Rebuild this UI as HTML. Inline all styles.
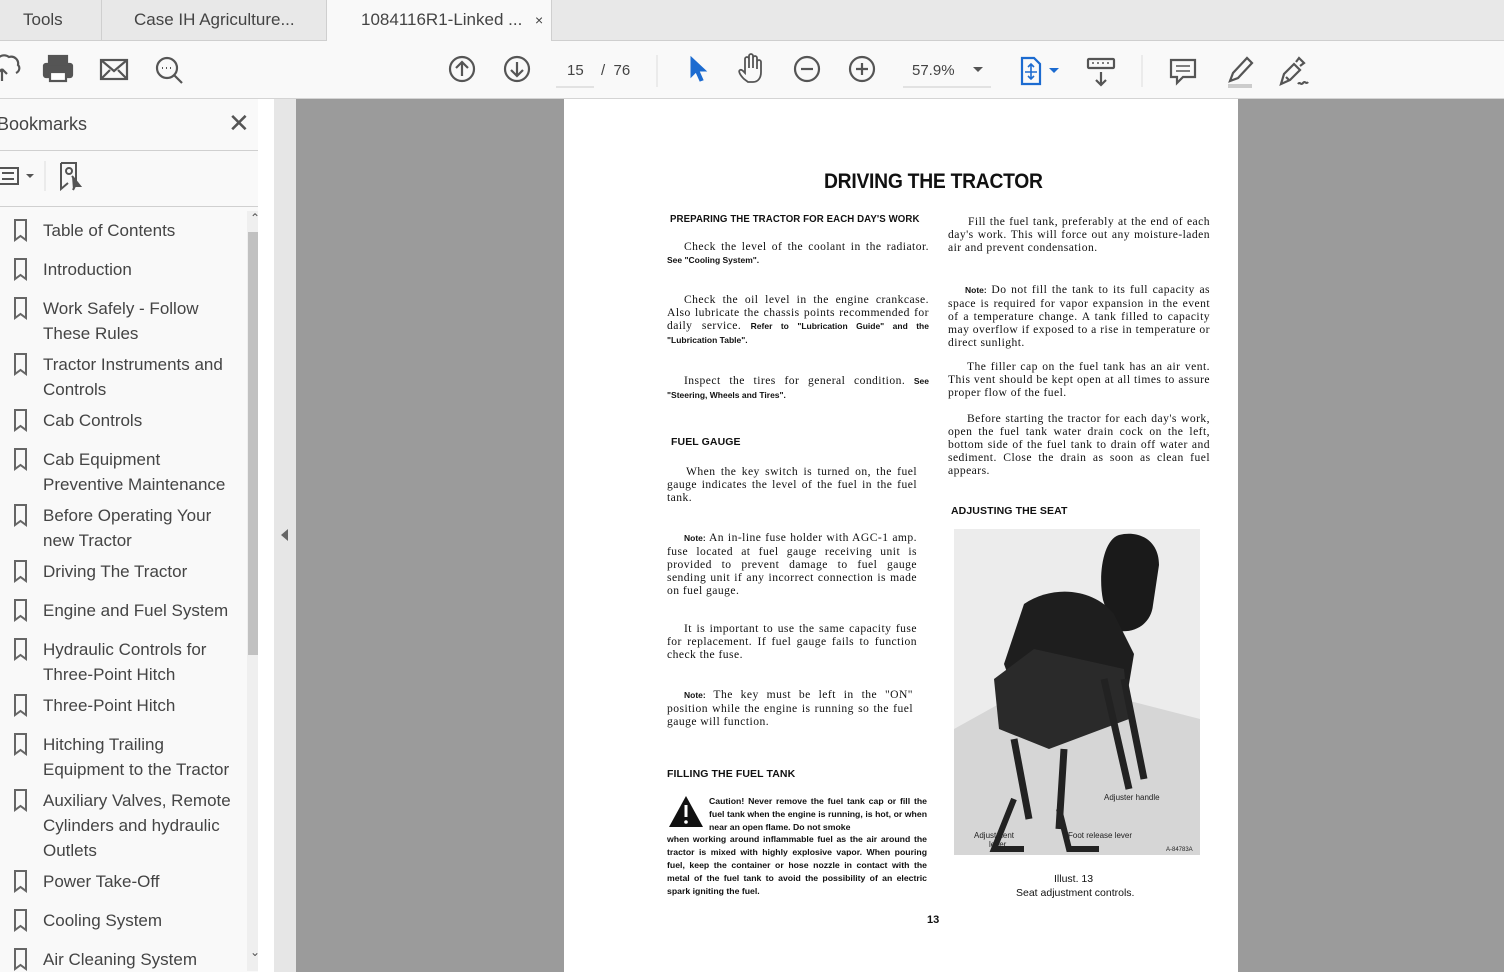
<!DOCTYPE html>
<html><head><meta charset="utf-8"><style>
*{margin:0;padding:0;box-sizing:border-box}
html,body{width:1504px;height:972px;overflow:hidden}
body{background:#9b9b9b;font-family:"Liberation Sans",sans-serif;position:relative}
.abs{position:absolute}
#tabs{left:0;top:0;width:1504px;height:41px;background:#e8e8e8;border-bottom:1px solid #cfcfcf}
.tab{position:absolute;top:0;height:41px;font-size:17px;color:#444;line-height:40px;border-right:1px solid #cfcfcf}
#tb{left:0;top:41px;width:1504px;height:58px;background:#f9f9f9;border-bottom:1px solid #d4d4d4}
#side{left:0;top:99px;width:274px;height:873px;background:#f9f9f9;overflow:hidden}
#split{left:274px;top:99px;width:22px;height:873px;background:#e6e6e6}
#page{left:564px;top:99px;width:674px;height:873px;background:#fff;font-family:"Liberation Serif",serif;color:#111}
.bm{position:absolute;left:43px;width:210px;white-space:nowrap;font-size:17px;color:#444;line-height:25px}
.p{position:absolute;font-size:11.6px;line-height:13px;letter-spacing:.45px;text-align:justify}
.h{position:absolute;font-family:"Liberation Sans",sans-serif;font-weight:bold;font-size:10.5px;letter-spacing:.1px;white-space:nowrap}
.sm{font-family:"Liberation Sans",sans-serif;font-size:8.5px;font-weight:bold;letter-spacing:0}
</style></head><body>
<div id="tabs" class="abs">
<div class="tab" style="left:0;width:102px;padding-left:23px">Tools</div>
<div class="tab" style="left:102px;width:225px;padding-left:32px">Case IH Agriculture...</div>
<div class="tab" style="left:327px;width:225px;background:#f9f9f9;height:42px;padding-left:34px">1084116R1-Linked ... <span style="font-size:14px;margin-left:8px">×</span></div>
</div>
<div id="tb" class="abs">
<svg width="1504" height="58" style="position:absolute;left:0;top:0" fill="none" stroke="#555" stroke-width="2.2">
<path d="M2 40v-12m0 0l-5 5M2 28l5 5M-3 26a8 8 0 0 1 12-10a7 7 0 0 1 9 8c2 2 2 6-2 8"/>
<rect x="44" y="23" width="28" height="13" rx="2" fill="#555"/><rect x="49" y="15" width="18" height="8" fill="#555"/><rect x="50" y="31" width="16" height="9" fill="#fff" stroke="#555"/>
<rect x="101" y="19" width="26" height="19"/><path d="M101 19l13 11 13-11M101 38l9-9m17 9l-9-9"/>
<circle cx="167" cy="27" r="10"/><path d="M174 34l8 8"/><path d="M162 27h1m3 0h1m3 0h1" stroke-width="2"/>
<circle cx="462" cy="28" r="12"/><path d="M462 35V21m-6 6l6-6 6 6"/>
<circle cx="517" cy="28" r="12"/><path d="M517 21v14m-6-6l6 6 6-6"/>
<path d="M556 46h38M903 46h88" stroke="#ccc" stroke-width="1"/>
<path d="M657 14v32M1142 14v32" stroke="#ddd" stroke-width="1"/>
<path d="M691 16l15 14h-7l4 9-3 1-4-9-5 5z" fill="#1c6bd0" stroke="#1c6bd0" stroke-width="1"/>
<path d="M744 38c-4-4-6-8-4-9 2-1 4 2 5 3V18a2 2 0 0 1 4 0v9V15a2 2 0 0 1 4 0v12V17a2 2 0 0 1 4 0v11-7a2 2 0 0 1 4 0v10c0 6-3 10-8 10h-5z" stroke-width="1.8"/>
<circle cx="807" cy="28" r="12"/><path d="M801 28h12"/>
<circle cx="862" cy="28" r="12"/><path d="M856 28h12M862 22v12"/>
<path d="M973 26l5 5 5-5z" fill="#555" stroke="none"/>
<path d="M1022 17h12l6 6v20h-18z" stroke="#1c6bd0"/><path d="M1031 23v15m-6-7h12m-9-5l3-3 3 3m-6 9l3 3 3-3" stroke="#1c6bd0" stroke-width="1.6"/>
<path d="M1049 27l5 5 5-5z" fill="#1c6bd0" stroke="none"/>
<rect x="1088" y="18" width="26" height="9" rx="1"/><path d="M1092 22h2m3 0h2m3 0h2m3 0h2" stroke-width="1.4"/><path d="M1101 31v13m-5-5l5 5 5-5"/>
<path d="M1171 19h24v17h-12l-6 6v-6h-6z"/><path d="M1176 25h14M1176 30h14" stroke-width="1.5"/>
<path d="M1230 40l3-8 14-15 5 5-14 15z"/><path d="M1228 45h24" stroke="#ccc" stroke-width="4"/>
<path d="M1281 43l3-10 10-10 6 6-10 10zM1296 21l3-4 5 5-4 3M1286 36l3 3M1298 43c2-3 3 2 5-1s3 2 5-1"/>
</svg>
<div class="abs" style="left:567px;top:21px;font-size:15px;color:#444">15</div>
<div class="abs" style="left:601px;top:21px;font-size:15px;color:#444">/ &nbsp;76</div>
<div class="abs" style="left:912px;top:21px;font-size:15px;color:#444">57.9%</div>
</div>
<div id="side" class="abs">
<div class="abs" style="left:-3px;top:15px;font-size:18px;color:#444">Bookmarks</div>
<div class="abs" style="left:228px;top:9px;font-size:26px;color:#555">✕</div>
<div class="abs" style="left:0;top:51px;width:258px;height:1px;background:#d0d0d0"></div>
<svg class="abs" style="left:0;top:62px" width="100" height="32" fill="none" stroke="#555" stroke-width="2"><rect x="-4" y="7" width="22" height="16"/><path d="M2 12h12M2 18h12M-2 12h1M-2 18h1"/><path d="M26 13l4 4 4-4z" fill="#555" stroke="none"/><path d="M45 0v30" stroke="#ddd" stroke-width="1"/><path d="M61 2h15v20M61 2v26l7-6" /><circle cx="69" cy="10" r="3"/><path d="M72 15l8 10h-5l-2 4" fill="#555"/></svg>
<div class="abs" style="left:0;top:107px;width:258px;height:1px;background:#d0d0d0"></div>
<div class="abs" style="left:247px;top:112px;width:18px;height:760px;background:#efefef"></div>
<div class="abs" style="left:248px;top:133px;width:16px;height:423px;background:#c1c1c1"></div>
<div class="abs" style="left:250px;top:112px;font-size:12px;color:#555">⌃</div>
<div class="abs" style="left:250px;top:846px;font-size:12px;color:#555">⌄</div>
<svg class="abs" style="left:0;top:0" width="30" height="873" fill="none" stroke="#666" stroke-width="2">
<g id="b"><path d="M15 121h11v20l-5.5-4-5.5 4z"/></g>
<use href="#b" y="39"/><use href="#b" y="78"/><use href="#b" y="134"/><use href="#b" y="190"/><use href="#b" y="229"/><use href="#b" y="285"/><use href="#b" y="341"/><use href="#b" y="380"/><use href="#b" y="419"/><use href="#b" y="475"/><use href="#b" y="514"/><use href="#b" y="570"/><use href="#b" y="651"/><use href="#b" y="690"/><use href="#b" y="729"/>
</svg>
<div class="bm" style="top:119px">Table of Contents</div>
<div class="bm" style="top:158px">Introduction</div>
<div class="bm" style="top:197px">Work Safely - Follow<br>These Rules</div>
<div class="bm" style="top:253px">Tractor Instruments and<br>Controls</div>
<div class="bm" style="top:309px">Cab Controls</div>
<div class="bm" style="top:348px">Cab Equipment<br>Preventive Maintenance</div>
<div class="bm" style="top:404px">Before Operating Your<br>new Tractor</div>
<div class="bm" style="top:460px">Driving The Tractor</div>
<div class="bm" style="top:499px">Engine and Fuel System</div>
<div class="bm" style="top:538px">Hydraulic Controls for<br>Three-Point Hitch</div>
<div class="bm" style="top:594px">Three-Point Hitch</div>
<div class="bm" style="top:633px">Hitching Trailing<br>Equipment to the Tractor</div>
<div class="bm" style="top:689px">Auxiliary Valves, Remote<br>Cylinders and hydraulic<br>Outlets</div>
<div class="bm" style="top:770px">Power Take-Off</div>
<div class="bm" style="top:809px">Cooling System</div>
<div class="bm" style="top:848px">Air Cleaning System</div>
</div>
<div id="split" class="abs"><div class="abs" style="left:7px;top:430px;width:0;height:0;border-top:6px solid transparent;border-bottom:6px solid transparent;border-right:7px solid #666"></div></div>
<div style="position:absolute;left:258px;top:99px;width:16px;height:873px;background:#fff"></div>
<div id="page" class="abs">
<div class="abs" style="left:260px;top:71px;font-family:'Liberation Sans',sans-serif;font-size:21px;font-weight:bold;letter-spacing:-.3px;transform:scaleX(.92);transform-origin:left;white-space:nowrap">DRIVING THE TRACTOR</div>
<div class="h" style="left:106px;top:114px;transform:scaleX(.92);transform-origin:left">PREPARING THE TRACTOR FOR EACH DAY'S WORK</div>
<div class="p" style="left:103px;top:141px;width:262px;text-indent:17px">Check the level of the coolant in the radi­ator. <span class="sm">See "Cooling System".</span></div>
<div class="p" style="left:103px;top:194px;width:262px;text-indent:17px">Check the oil level in the engine crank­case. Also lubricate the chassis points rec­ommended for daily service. <span class="sm">Refer to "Lubrication Guide" and the "Lubrication Table".</span></div>
<div class="p" style="left:103px;top:275px;width:262px;text-indent:17px">Inspect the tires for general condition. <span class="sm">See "Steering, Wheels and Tires".</span></div>
<div class="h" style="left:107px;top:337px">FUEL GAUGE</div>
<div class="p" style="left:103px;top:366px;width:250px;text-indent:19px">When the key switch is turned on, the fuel gauge indicates the level of the fuel in the fuel tank.</div>
<div class="p" style="left:103px;top:432px;width:250px;text-indent:17px"><span class="sm">Note:</span> An in-line fuse holder with AGC-1 amp. fuse located at fuel gauge receiving unit is provided to prevent damage to fuel gauge sending unit if any incorrect connec­tion is made on fuel gauge.</div>
<div class="p" style="left:103px;top:523px;width:250px;text-indent:17px">It is important to use the same capacity fuse for replacement. If fuel gauge fails to function check the fuse.</div>
<div class="p" style="left:103px;top:589px;width:246px;text-indent:17px"><span class="sm">Note:</span> The key must be left in the "ON" position while the engine is running so the fuel gauge will function.</div>
<div class="h" style="left:103px;top:669px">FILLING THE FUEL TANK</div>
<svg class="abs" style="left:104px;top:696px" width="36" height="34"><path d="M18 1L35 32H1z" fill="#111"/><path d="M18 10v12" stroke="#fff" stroke-width="3"/><circle cx="18" cy="27" r="1.8" fill="#fff"/></svg>
<div class="abs" style="left:103px;top:696px;width:260px;font-size:8.7px;line-height:12.8px;font-weight:bold;font-family:'Liberation Sans',sans-serif;text-align:justify">
<div style="padding-left:42px">Caution! Never remove the fuel tank cap or fill the fuel tank when the engine is running, is hot, or when near an open flame. Do not smoke</div>when working around inflammable fuel as the air around the tractor is mixed with highly explosive vapor. When pouring fuel, keep the container or hose nozzle in con­tact with the metal of the fuel tank to avoid the possi­bility of an electric spark igniting the fuel.</div>
<div class="p" style="left:384px;top:116px;width:262px;text-indent:20px">Fill the fuel tank, preferably at the end of each day's work. This will force out any moisture-laden air and prevent condensa­tion.</div>
<div class="p" style="left:384px;top:184px;width:262px;text-indent:17px"><span class="sm">Note:</span> Do not fill the tank to its full capac­ity as space is required for vapor expansion in the event of a temperature change. A tank filled to capacity may overflow if exposed to a rise in temperature or direct sunlight.</div>
<div class="p" style="left:384px;top:261px;width:262px;text-indent:19px">The filler cap on the fuel tank has an air vent. This vent should be kept open at all times to assure proper flow of the fuel.</div>
<div class="p" style="left:384px;top:313px;width:262px;text-indent:19px">Before starting the tractor for each day's work, open the fuel tank water drain cock on the left, bottom side of the fuel tank to drain off water and sediment. Close the drain as soon as clean fuel appears.</div>
<div class="h" style="left:387px;top:406px">ADJUSTING THE SEAT</div>
<div class="abs" style="left:390px;top:430px;width:246px;height:326px;background:#f2f2f2;overflow:hidden">
<svg width="246" height="326"><rect width="246" height="326" fill="#ececec"/><path d="M0 200l90-50 156 40v136H0z" fill="#d6d6d6"/>
<path d="M165 6c20-5 40 5 40 30l-6 40c-2 20-20 30-40 25l-10-30c-5-25 0-60 16-65z" fill="#1a1a1a"/>
<path d="M70 75c30-20 70-15 90 10l20 40-10 60-40 20-60-15-20-55z" fill="#1e1e1e"/>
<path d="M40 150l40-30 90 20 5 50-80 30-50-20z" fill="#2a2a2a"/>
<path d="M60 210l15 80M110 220l-5 80M150 150l25 110M170 150l20 100" stroke="#222" stroke-width="7"/>
<path d="M60 270l-20 50h30M105 280l10 40h30" stroke="#222" stroke-width="6" fill="none"/>
<text x="150" y="271" font-size="8" font-family="Liberation Sans" fill="#222">Adjuster handle</text>
<text x="20" y="309" font-size="8" font-family="Liberation Sans" fill="#222">Adjustment</text><text x="35" y="318" font-size="8" font-family="Liberation Sans" fill="#222">lever</text>
<text x="114" y="309" font-size="8" font-family="Liberation Sans" fill="#222">Foot release lever</text>
<text x="212" y="322" font-size="6" font-family="Liberation Sans" fill="#222">A-84783A</text></svg></div>
<div class="abs" style="left:490px;top:774px;font-family:'Liberation Sans',sans-serif;font-size:10.5px">Illust. 13</div>
<div class="abs" style="left:452px;top:788px;font-family:'Liberation Sans',sans-serif;font-size:10.5px">Seat adjustment controls.</div>
<div class="abs" style="left:363px;top:815px;font-family:'Liberation Sans',sans-serif;font-size:11px;font-weight:bold">13</div>
</div>
</body></html>
